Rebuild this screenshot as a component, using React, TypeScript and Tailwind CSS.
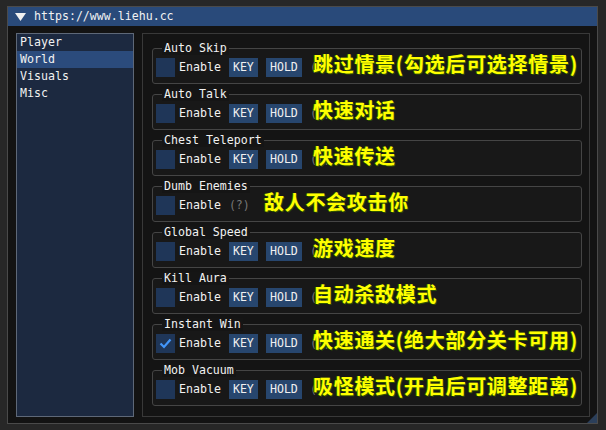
import React from 'react'

const mono = "font-['DejaVu_Sans_Mono','Liberation_Mono',monospace]"

const tabs = ['Player', 'World', 'Visuals', 'Misc']

type Feature = {
  name: string
  note: string
  keys: boolean
  checked?: boolean
  noteLeft: string
}

const features: Feature[] = [
  { name: 'Auto Skip', note: '跳过情景(勾选后可选择情景)', keys: true, noteLeft: 'left-[160px]' },
  { name: 'Auto Talk', note: '快速对话', keys: true, noteLeft: 'left-[160px]' },
  { name: 'Chest Teleport', note: '快速传送', keys: true, noteLeft: 'left-[160px]' },
  { name: 'Dumb Enemies', note: '敌人不会攻击你', keys: false, noteLeft: 'left-[111px]' },
  { name: 'Global Speed', note: '游戏速度', keys: true, noteLeft: 'left-[160px]' },
  { name: 'Kill Aura', note: '自动杀敌模式', keys: true, noteLeft: 'left-[160px]' },
  { name: 'Instant Win', note: '快速通关(绝大部分关卡可用)', keys: true, checked: true, noteLeft: 'left-[160px]' },
  { name: 'Mob Vacuum', note: '吸怪模式(开启后可调整距离)', keys: true, noteLeft: 'left-[160px]' },
]

function Checkbox({ checked }: { checked?: boolean }) {
  return (
    <div className="w-[19px] h-[19px] bg-[#1f3658] flex items-center justify-center shrink-0">
      {checked && (
        <svg width="13" height="11" viewBox="0 0 13 11">
          <polyline points="1.5,5.5 5,9 11.5,1.5" fill="none" stroke="#4296fa" strokeWidth="2.2" />
        </svg>
      )}
    </div>
  )
}

function KeyButton({ label, width }: { label: string; width: string }) {
  return (
    <div className={`${width} h-[19px] bg-[#27466e] text-[#f0f0f0] flex items-center justify-center ml-[8px] shrink-0`}>
      {label}
    </div>
  )
}

function GroupBox({ f }: { f: Feature }) {
  return (
    <div className="relative h-[36px] border border-[#454545] rounded-[3px] bg-[#181818] pl-[3px]">
      <div className="-mt-[7px] ml-[6px] px-[2px] w-fit h-[13px] leading-[13px] bg-[#151515] text-[#f2f2f2]">
        {f.name}
      </div>
      <div className="mt-[3px] flex items-center h-[19px]">
        <Checkbox checked={f.checked} />
        <span className="ml-[4px] text-[#f2f2f2]">Enable</span>
        {f.keys && (
          <>
            <KeyButton label="KEY" width="w-[29px]" />
            <KeyButton label="HOLD" width="w-[36px]" />
          </>
        )}
        <span className="ml-[8px] text-[#777777]">(?)</span>
      </div>
      <div
        className={`absolute top-[4px] ${f.noteLeft} whitespace-nowrap text-[20px] leading-[22px] font-bold tracking-[0.7px] text-[#ffff00] font-['Noto_Sans_CJK_SC',sans-serif] [text-shadow:1px_1px_0_#2d5200,-1px_0_0_#2d5200]`}
      >
        {f.note}
      </div>
    </div>
  )
}

export default function App() {
  return (
    <div className={`w-[606px] h-[430px] bg-[#272727] pt-[6px] pl-[7px] overflow-hidden ${mono} text-[11.6px]`}>
      <div className="relative w-[591px] h-[418px] border border-[#4a4a4a] bg-[#131313] flex flex-col">
        <div className="h-[19px] bg-[#294a7a] flex items-center pl-[7px] text-[#f2f2f2]">
          <svg width="11" height="8" viewBox="0 0 11 8" className="mr-[8px]">
            <polygon points="0,0 11,0 5.5,8" fill="#f0f0f0" />
          </svg>
          <span>https://www.liehu.cc</span>
        </div>
        <div className="flex pt-[7px] pl-[8px] pr-[7px] gap-[8px]">
          <div className="w-[118px] h-[384px] border border-[#5e6878] bg-[#1c2940] text-[#f2f2f2]">
            {tabs.map((t) => (
              <div
                key={t}
                className={`h-[17px] leading-[17px] pl-[3px] ${t === 'World' ? 'bg-[#2b4b7c]' : ''}`}
              >
                {t}
              </div>
            ))}
          </div>
          <div className="w-[448px] h-[384px] border border-[#393939] bg-[#141414] pt-[14px] pl-[9px] pr-[7px] flex flex-col gap-[10px]">
            {features.map((f) => (
              <GroupBox key={f.name} f={f} />
            ))}
          </div>
        </div>
        <svg width="10" height="10" viewBox="0 0 10 10" className="absolute right-0 bottom-0">
          <polygon points="10,0 10,10 0,10" fill="#2b3f5a" />
        </svg>
      </div>
    </div>
  )
}
